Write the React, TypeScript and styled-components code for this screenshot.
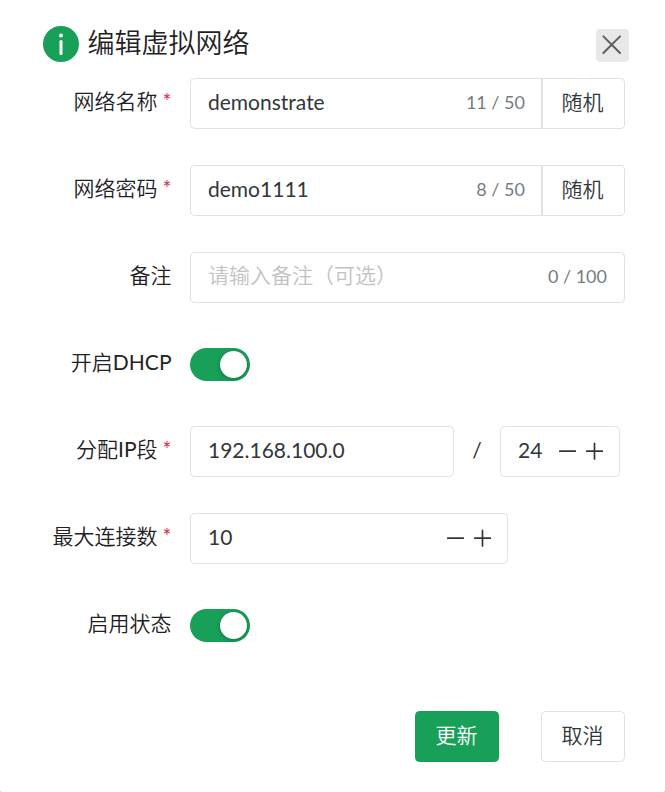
import React from 'react';
import styled, { createGlobalStyle } from 'styled-components';

const GlobalStyle = createGlobalStyle`
  * { box-sizing: border-box; }
  body {
    margin: 0;
    background: #c4c4c4;
    font-family: Lato, "Noto Sans CJK SC DemiLight", "Noto Sans CJK SC", sans-serif;
    font-size: 21px;
    color: #333639;
  }
`;

const Dialog = styled.main`
  width: 665px;
  height: 792px;
  padding: 26px 40px 30px 43px;
  background: #fff;
  border-radius: 0 0 2px 2px;
  display: flex;
  flex-direction: column;
  overflow: hidden;
`;

const Header = styled.header`
  display: flex;
  align-items: flex-start;
  height: 52px;
  flex: none;
`;

const InfoIcon = styled.svg`
  width: 36px;
  height: 36px;
  margin-right: 8.5px;
  flex: none;
`;

const Title = styled.h1`
  margin: 0;
  flex: 1;
  font-size: 27px;
  font-weight: 400;
  line-height: 34px;
  color: #1f2225;
`;

const CloseButton = styled.button`
  width: 33px;
  height: 33px;
  margin: 2.5px -3.5px 0 0;
  padding: 0;
  border: 0;
  border-radius: 4px;
  background: #e8e8e8;
  display: flex;
  align-items: center;
  justify-content: center;
`;

const Form = styled.div`
  display: flex;
  flex-direction: column;
  gap: 36px;
`;

const Row = styled.div`
  display: flex;
  height: 51px;
`;

const Label = styled.div`
  width: 129px;
  margin-right: 18px;
  padding: 4px 0.5px 0 0;
  line-height: 38px;
  text-align: right;
  white-space: nowrap;
  color: #1f2225;
`;

const Star = styled.span`
  margin-left: 5px;
  color: #d03050;
`;

const Field = styled.div<{ $w?: number; $joined?: boolean }>`
  width: ${(p) => p.$w ?? 435}px;
  height: 51px;
  padding: 0 ${(p) => (p.$joined ? '16px' : '17px')} 0 17px;
  border: 1px solid #e0e0e6;
  border-radius: ${(p) => (p.$joined ? '4.5px 0 0 4.5px' : '4.5px')};
  display: flex;
  align-items: center;
  line-height: 48px;
  white-space: nowrap;
`;

const Value = styled.span<{ $placeholder?: boolean }>`
  flex: 1;
  padding-bottom: ${(p) => (p.$placeholder ? '5px' : '3px')};
  color: ${(p) => (p.$placeholder ? '#c2c2c2' : '#333639')};
`;

const Count = styled.span`
  font-size: 18px;
  color: #767c82;
  padding-bottom: 4px;
`;

const Button = styled.button<{ $primary?: boolean; $joined?: boolean }>`
  width: 84px;
  height: 51px;
  padding: 0 ${(p) => (p.$joined ? '2px' : '1px')} 5px 0;
  font: inherit;
  color: ${(p) => (p.$primary ? '#fff' : '#333639')};
  background: ${(p) => (p.$primary ? '#18a058' : '#fff')};
  border: 1px solid ${(p) => (p.$primary ? '#18a058' : '#e0e0e6')};
  border-radius: ${(p) => (p.$joined ? '0 4.5px 4.5px 0' : '4.5px')};
  margin-left: ${(p) => (p.$joined ? '-1px' : '0')};
  border-left-width: ${(p) => (p.$joined ? '2px' : '1px')};
`;

const Slash = styled.span`
  width: 46px;
  line-height: 48px;
  text-align: center;
`;

const Steps = styled.svg`
  width: 46px;
  height: 20px;
  margin: 0 -2px 2px 0;
  flex: none;
`;

const Track = styled.div`
  width: 60px;
  height: 33px;
  margin-top: 9px;
  padding: 3px;
  border-radius: 17px;
  background: #18a058;
  display: flex;
  justify-content: flex-end;
`;

const Knob = styled.div`
  width: 27px;
  height: 27px;
  border-radius: 50%;
  background: #fff;
  box-shadow: 0 1px 4px rgba(0, 0, 0, 0.3), inset 0 0 1px rgba(0, 0, 0, 0.05);
`;

const Footer = styled.footer`
  display: flex;
  justify-content: flex-end;
  gap: 42px;
  margin-top: auto;
`;

function FormRow({ label, required, children }: { label: string; required?: boolean; children: React.ReactNode }) {
  return (
    <Row>
      <Label>
        {label}
        {required && <Star>*</Star>}
      </Label>
      {children}
    </Row>
  );
}

function RandomField({ value, count }: { value: string; count: string }) {
  return (
    <>
      <Field $w={352} $joined>
        <Value>{value}</Value>
        <Count>{count}</Count>
      </Field>
      <Button $joined>随机</Button>
    </>
  );
}

function NumberField({ value, width }: { value: string; width: number }) {
  return (
    <Field $w={width}>
      <Value>{value}</Value>
      <Steps viewBox="0 0 46 20" stroke="#333639" strokeWidth="1.7" strokeLinecap="round">
        <path d="M1.8 10.2H17.3M28.8 10.2H44.3M36.5 2.4V18" />
      </Steps>
    </Field>
  );
}

const Switch = () => (
  <Track role="switch" aria-checked="true">
    <Knob />
  </Track>
);

export default function App() {
  return (
    <>
      <GlobalStyle />
      <Dialog>
        <Header>
          <InfoIcon viewBox="0 0 36 36">
            <circle cx="18" cy="18" r="18" fill="#18a058" />
            <circle cx="18" cy="9.6" r="2" fill="#fff" />
            <path d="M18 15.4V27.4" stroke="#fff" strokeWidth="3" strokeLinecap="round" />
          </InfoIcon>
          <Title>编辑虚拟网络</Title>
          <CloseButton aria-label="关闭">
            <svg width="20" height="20" viewBox="0 0 20 20" stroke="#5c5f62" strokeWidth="2" strokeLinecap="round">
              <path d="M1.4 1.4L18 18M18 1.4L1.4 18" />
            </svg>
          </CloseButton>
        </Header>
        <Form>
          <FormRow label="网络名称" required>
            <RandomField value="demonstrate" count="11 / 50" />
          </FormRow>
          <FormRow label="网络密码" required>
            <RandomField value="demo1111" count="8 / 50" />
          </FormRow>
          <FormRow label="备注">
            <Field>
              <Value $placeholder>请输入备注（可选）</Value>
              <Count>0 / 100</Count>
            </Field>
          </FormRow>
          <FormRow label="开启DHCP">
            <Switch />
          </FormRow>
          <FormRow label="分配IP段" required>
            <Field $w={264}>
              <Value>192.168.100.0</Value>
            </Field>
            <Slash>/</Slash>
            <NumberField value="24" width={120} />
          </FormRow>
          <FormRow label="最大连接数" required>
            <NumberField value="10" width={318} />
          </FormRow>
          <FormRow label="启用状态">
            <Switch />
          </FormRow>
        </Form>
        <Footer>
          <Button $primary>更新</Button>
          <Button>取消</Button>
        </Footer>
      </Dialog>
    </>
  );
}
